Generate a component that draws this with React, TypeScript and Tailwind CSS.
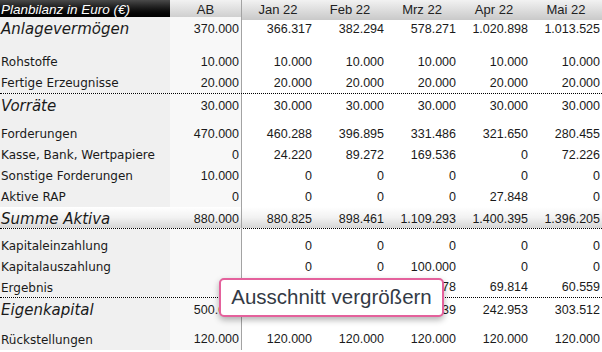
import React from "react";

type Row = {
  label: string;
  values: string[];
  kind?: "big" | "sum";
  h: string;
  dotted?: boolean;
  after?: string;
};

const months = ["AB", "Jan 22", "Feb 22", "Mrz 22", "Apr 22", "Mai 22"];

const rows: Row[] = [
  { label: "Anlagevermögen", values: ["370.000", "366.317", "382.294", "578.271", "1.020.898", "1.013.525"], kind: "big", h: "h-[24px]", after: "h-[10px]" },
  { label: "Rohstoffe", values: ["10.000", "10.000", "10.000", "10.000", "10.000", "10.000"], h: "h-[21px]" },
  { label: "Fertige Erzeugnisse", values: ["20.000", "20.000", "20.000", "20.000", "20.000", "20.000"], h: "h-[22px]", dotted: true },
  { label: "Vorräte", values: ["30.000", "30.000", "30.000", "30.000", "30.000", "30.000"], kind: "big", h: "h-[22px]", after: "h-[7px]" },
  { label: "Forderungen", values: ["470.000", "460.288", "396.895", "331.486", "321.650", "280.455"], h: "h-[21px]" },
  { label: "Kasse, Bank, Wertpapiere", values: ["0", "24.220", "89.272", "169.536", "0", "72.226"], h: "h-[21px]" },
  { label: "Sonstige Forderungen", values: ["10.000", "0", "0", "0", "0", "0"], h: "h-[21px]" },
  { label: "Aktive RAP", values: ["0", "0", "0", "0", "27.848", "0"], h: "h-[21px]" },
  { label: "Summe Aktiva", values: ["880.000", "880.825", "898.461", "1.109.293", "1.400.395", "1.396.205"], kind: "sum", h: "h-[22px]", dotted: true, after: "h-[6px]" },
  { label: "Kapitaleinzahlung", values: ["", "0", "0", "0", "0", "0"], h: "h-[21px]" },
  { label: "Kapitalauszahlung", values: ["", "0", "0", "100.000", "0", "0"], h: "h-[21px]" },
  { label: "Ergebnis", values: ["", "825", "17.636", "73.178", "69.814", "60.559"], h: "h-[21px]", dotted: true },
  { label: "Eigenkapital", values: ["500.000", "500.825", "518.461", "391.639", "242.953", "303.512"], kind: "big", h: "h-[22px]", after: "h-[8px]" },
  { label: "Rückstellungen", values: ["120.000", "120.000", "120.000", "120.000", "120.000", "120.000"], h: "h-[22px]" },
];

const cols = "grid grid-cols-[170px_72px_72px_72px_72px_72px_72px]";

function Spacer({ h }: { h: string }) {
  return (
    <div className={`${cols} ${h}`}>
      <div className="bg-[#f0f0f0]" />
      <div className="border-r border-[#a3a3a3] bg-[#f8f8f8]" />
    </div>
  );
}

function TableRow({ row }: { row: Row }) {
  const sum = row.kind === "sum";
  const big = row.kind === "big" || sum;
  return (
    <>
      <div
        className={`${cols} ${row.h} items-center ${row.dotted ? "border-b border-dotted border-black" : ""} ${
          sum ? "bg-gradient-to-b from-white via-[#f2f2f2] to-[#d6d6d6]" : ""
        }`}
      >
        <div
          className={`flex h-full items-center pl-[1px] pt-[1px] text-[#1a1a1a] ${sum ? "" : "bg-[#f0f0f0]"} ${
            big ? "font-['DejaVu_Sans',sans-serif] text-[15px] italic" : "font-['DejaVu_Sans',sans-serif] text-[12px]"
          }`}
        >
          {row.label}
        </div>
        {row.values.map((v, i) => (
          <div
            key={i}
            className={`flex h-full items-center justify-end pr-[2px] pt-[1px] font-['Liberation_Sans',Arial,sans-serif] text-[12.5px] text-[#1a1a1a] ${
              i === 0 ? `border-r border-[#a3a3a3] ${sum ? "" : "bg-[#f8f8f8]"}` : ""
            }`}
          >
            {v}
          </div>
        ))}
      </div>
      {row.after && <Spacer h={row.after} />}
    </>
  );
}

export default function App() {
  return (
    <div className="relative h-[352px] w-[602px] overflow-hidden bg-white">
      <div className={`${cols} h-[17px] border-b border-dotted border-black`}>
        <div className="flex items-center bg-gradient-to-b from-[#4a4a4a] via-[#111] to-black pl-[1px] font-['Liberation_Sans',Arial,sans-serif] text-[13.5px] italic text-white">
          Planbilanz in Euro (€)
        </div>
        {months.map((m, i) => (
          <div
            key={m}
            className={`flex items-center justify-center bg-gradient-to-b from-[#f2f2f2] to-[#c9c9c9] font-['Liberation_Sans',Arial,sans-serif] text-[13px] text-[#222] ${
              i === 0 ? "border-r border-[#a3a3a3]" : ""
            }`}
          >
            {m}
          </div>
        ))}
      </div>

      {rows.map((r) => (
        <TableRow key={r.label} row={r} />
      ))}

      <div className="absolute left-[219px] top-[278px] flex h-[39px] w-[225px] items-center justify-center rounded-[5px] border-2 border-[#e4619c] bg-white font-['Liberation_Sans',Arial,sans-serif] text-[20.5px] text-[#333a45] shadow-[0_3px_6px_rgba(0,0,0,0.3)]">
        Ausschnitt vergrößern
      </div>
    </div>
  );
}
